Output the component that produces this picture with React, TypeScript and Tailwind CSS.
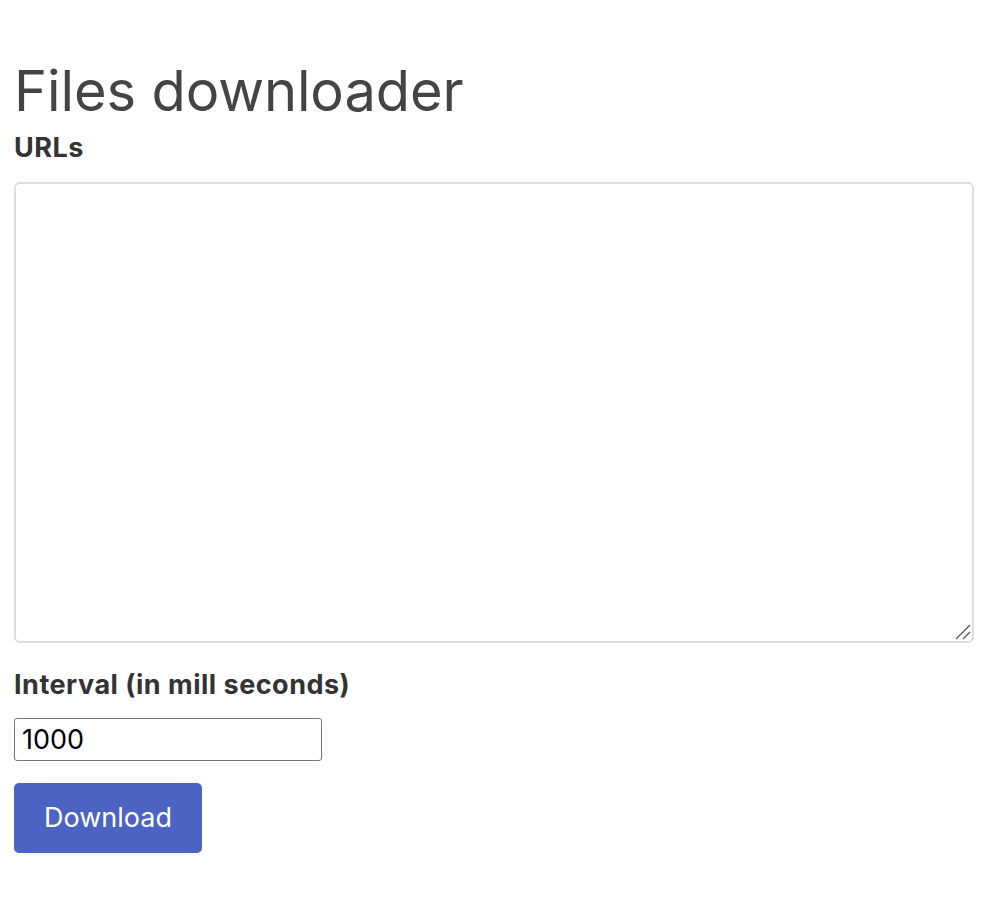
export default function App() {
  return (
    <div className="px-[14px] pt-[58px] bg-white min-h-[906px]" style={{ fontFamily: "Inter, 'Noto Sans', sans-serif" }}>
      <h1 className="text-[56px] leading-[67px] font-normal text-[#444444] tracking-[-0.1px]">Files downloader</h1>
      <label className="block mt-[3px] text-[27px] leading-[40px] font-bold text-[#333333] tracking-[0.5px]">URLs</label>
      <div className="relative mt-[14px] w-[960px] h-[461px]">
        <textarea className="block w-full h-full border-2 border-[#dddddd] rounded-[6px] bg-white resize-none" />
        <svg className="absolute right-[3px] bottom-[3px]" width="16" height="16" viewBox="0 0 16 16">
          <line x1="1" y1="15" x2="15" y2="1" stroke="#555" strokeWidth="1.2" />
          <line x1="8" y1="15" x2="15" y2="8" stroke="#555" strokeWidth="1.2" />
        </svg>
      </div>
      <label className="block mt-[22px] text-[27px] leading-[40px] font-bold text-[#333333] tracking-[0.5px]">Interval (in mill seconds)</label>
      <input
        defaultValue="1000"
        className="block mt-[13px] w-[308px] h-[43px] border border-[#767676] rounded-[3px] px-[7px] text-[27px] text-black"
      />
      <button className="block mt-[22px] w-[188px] h-[70px] bg-[#4b63c2] rounded-[5px] text-white text-[27px]">Download</button>
    </div>
  );
}
